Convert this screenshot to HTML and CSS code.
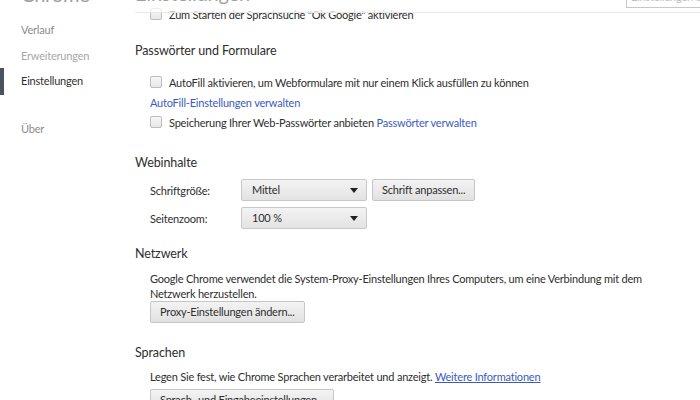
FILE: index.html
```html
<!DOCTYPE html>
<html lang="de">
<head>
<meta charset="utf-8">
<title>Einstellungen</title>
<link rel="stylesheet" href="styles.css">
</head>
<body>
<div class="page">
  <nav class="sidebar">
    <div class="brand">Chrome</div>
    <ul class="menu">
      <li class="item">Verlauf</li>
      <li class="item dim">Erweiterungen</li>
      <li class="item active">Einstellungen</li>
      <li class="item gap">Über</li>
    </ul>
  </nav>
  <main class="main">
    <header class="topbar">
      <h1 class="title">Einstellungen</h1>
      <div class="search">Einstellungen durchsuchen</div>
    </header>
    <div class="row first"><span class="cb"></span>Zum Starten der Sprachsuche "Ok Google" aktivieren</div>

    <section class="section">
      <h3 class="heading">Passwörter und Formulare</h3>
      <div class="body checks">
        <div class="row"><span class="cb"></span>AutoFill aktivieren, um Webformulare mit nur einem Klick ausfüllen zu können</div>
        <div class="row"><a class="link">AutoFill-Einstellungen verwalten</a></div>
        <div class="row"><span class="cb"></span>Speicherung Ihrer Web-Passwörter anbieten&nbsp;<a class="link">Passwörter verwalten</a></div>
      </div>
    </section>

    <section class="section sec-web">
      <h3 class="heading">Webinhalte</h3>
      <div class="body">
        <div class="field">
          <span class="label">Schriftgröße:</span>
          <span class="select">Mittel<span class="arrow"></span></span>
          <span class="btn">Schrift anpassen...</span>
        </div>
        <div class="field">
          <span class="label">Seitenzoom:</span>
          <span class="select">100 %<span class="arrow"></span></span>
        </div>
      </div>
    </section>

    <section class="section sec-net">
      <h3 class="heading">Netzwerk</h3>
      <div class="body">
        <p class="text net-text">Google Chrome verwendet die System-Proxy-Einstellungen Ihres Computers, um eine Verbindung mit dem Netzwerk herzustellen.</p>
        <span class="btn">Proxy-Einstellungen ändern...</span>
      </div>
    </section>

    <section class="section sec-lang">
      <h3 class="heading">Sprachen</h3>
      <div class="body">
        <p class="text lang-text">Legen Sie fest, wie Chrome Sprachen verarbeitet und anzeigt. <a class="link under">Weitere Informationen</a></p>
        <span class="btn">Sprach- und Eingabeeinstellungen...</span>
      </div>
    </section>
  </main>
</div>
</body>
</html>
```
FILE: styles.css
```css
* { box-sizing: border-box; }
html, body { margin: 0; padding: 0; background: #fff; }
body {
  font-family: Lato, "Noto Sans", sans-serif;
  font-size: 11px;
  letter-spacing: -0.2px;
  color: #2e2e2e;
  overflow: hidden;
  height: 400px;
}
.page { display: flex; height: 400px; }

.sidebar { width: 135px; flex: none; position: relative; }
.brand {
  margin-top: -16px;
  padding-left: 21px;
  font-size: 20px;
  line-height: 20px;
  color: #a0a0a0;
}
.menu { list-style: none; margin: 0; padding: 0; margin-top: 13px; }
.item {
  height: 25.5px;
  line-height: 25.5px;
  padding-left: 21px;
  color: #8c8c8c;
  position: relative;
}
.item.dim { color: #a8a8a8; }
.item.active { color: #303030; }
.item.active::before {
  content: "";
  position: absolute;
  left: 0; top: 0;
  width: 4px; height: 27px;
  background: #4b5363;
}
.item.gap { margin-top: 22.5px; }

.main { flex: 1; position: relative; }
.topbar {
  position: absolute;
  left: 0; right: 0; top: 0;
  height: 13px;
  border-bottom: 1px solid #e8e8e8;
  background: rgba(255,255,255,0.75);
  overflow: hidden;
  z-index: 2;
}
.title {
  margin: -17px 0 0 0;
  font-size: 20px;
  line-height: 20px;
  font-weight: normal;
  color: #a0a0a0;
}
.search {
  position: absolute;
  right: -2px; top: -14px;
  width: 76px; height: 22px;
  border: 1px solid #c8c8c8;
  color: #c0c0c0;
  font-size: 11px;
  padding: 3px 4px;
  white-space: nowrap;
  overflow: hidden;
}

.row {
  display: flex;
  align-items: center;
  height: 20px;
  white-space: nowrap;
}
.row.first { margin-top: 4px; padding-left: 15px; }
.cb {
  width: 12px; height: 12px;
  margin-right: 7px;
  border: 1px solid #bdbdbd;
  border-radius: 2px;
  background: linear-gradient(#f6f6f6, #e8e8e8);
  flex: none;
}
.link { color: #3b5bc4; text-decoration: none; }
.link.under { text-decoration: underline; }

.section { margin-top: 17px; }
.section.sec-web { margin-top: 21px; }
.section.sec-net { margin-top: 15px; }
.section.sec-lang { margin-top: 20px; }
.heading {
  margin: 0 0 6px 0;
  font-size: 12.5px;
  letter-spacing: -0.1px;
  font-weight: normal;
  color: #2e2e2e;
  line-height: 20px;
}
.body { padding-left: 15px; }
.body.checks { padding-top: 5px; }

.field { display: flex; align-items: center; height: 22px; }
.field + .field { margin-top: 6px; }
.label { width: 91px; flex: none; }
.select {
  position: relative;
  width: 126px; height: 22px;
  line-height: 20px;
  padding-left: 10px;
  border: 1px solid #c8c8c8;
  border-radius: 2px;
  background: linear-gradient(#f3f3f3, #e3e3e3);
}
.arrow {
  position: absolute;
  right: 8px; top: 8px;
  border-left: 4px solid transparent;
  border-right: 4px solid transparent;
  border-top: 5px solid #222;
}
.btn {
  display: inline-block;
  height: 22px;
  line-height: 20px;
  padding: 0 9px;
  border: 1px solid #c6c6c6;
  border-radius: 2px;
  background: linear-gradient(#f3f3f3, #e1e1e1);
  white-space: nowrap;
}
.field .btn { margin-left: 5px; }
.text { line-height: 15px; max-width: 520px; }
.net-text { margin: 7px 0 0 0; }
.lang-text { margin: 1px 0 5px 0; }
```
